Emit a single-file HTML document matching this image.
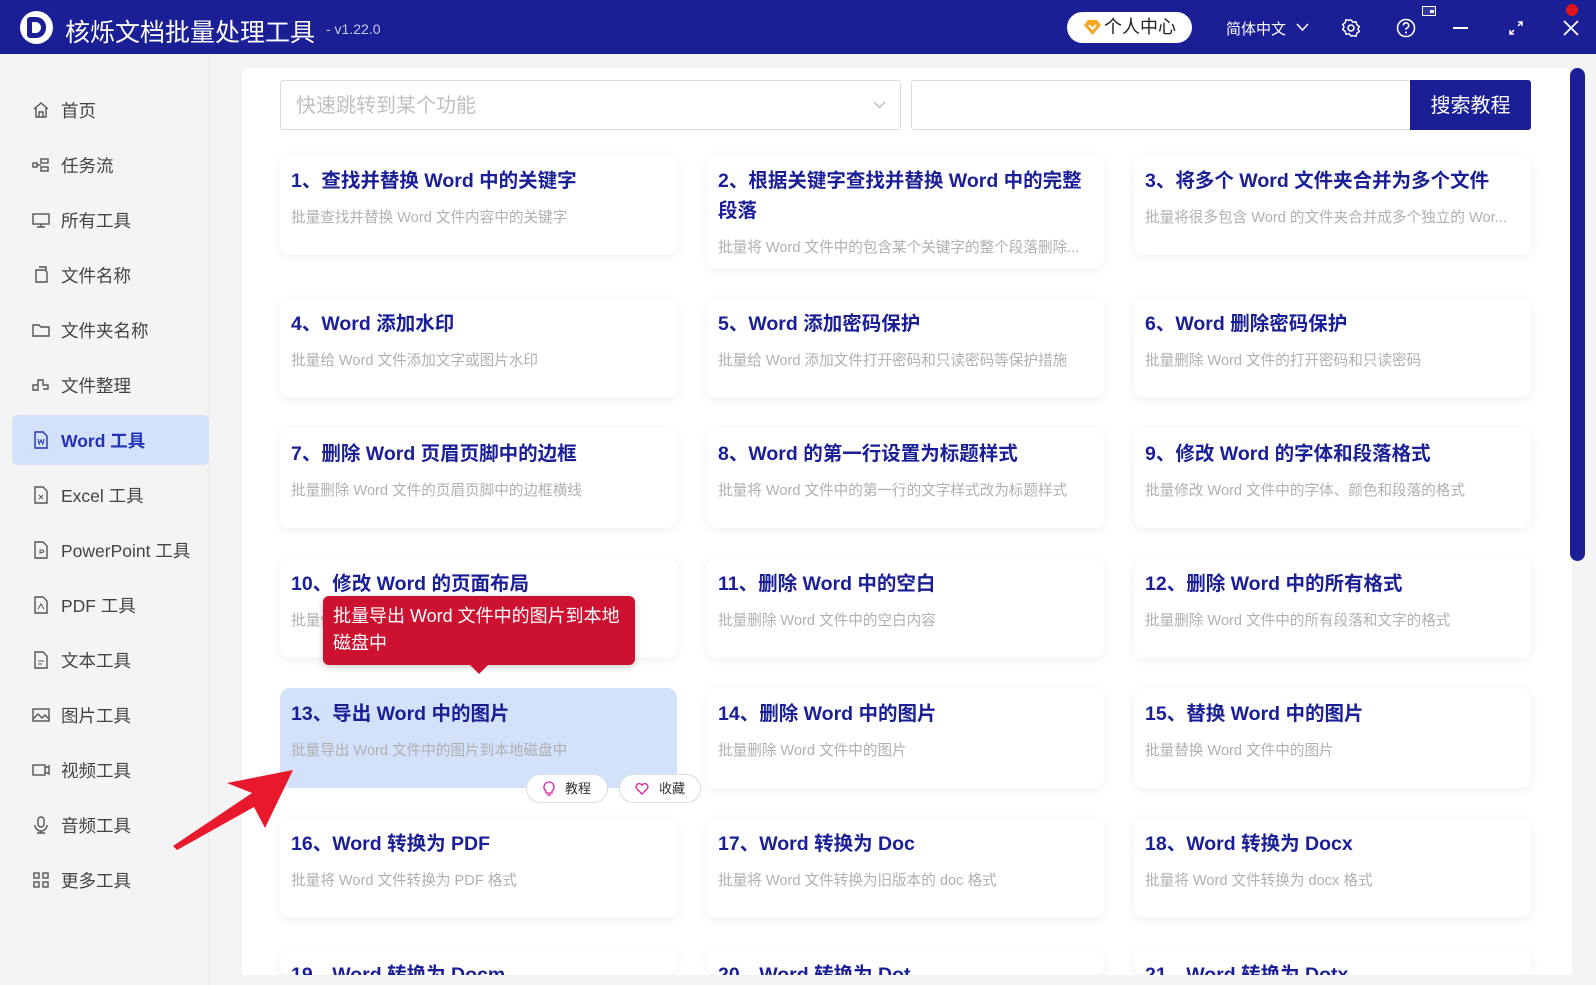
<!DOCTYPE html>
<html><head><meta charset="utf-8"><style>
*{margin:0;padding:0;box-sizing:border-box}
html,body{width:1596px;height:985px;overflow:hidden}
body{background:#f4f4f4;font-family:"Liberation Sans","Noto Sans CJK SC",sans-serif}
#w{position:relative;width:1596px;height:985px;overflow:hidden}
.hdr{position:absolute;left:0;top:0;width:1596px;height:54px;background:#1a1f96;color:#fff}
.abs{position:absolute}
.side{position:absolute;left:0;top:54px;width:209px;height:931px;background:#f4f4f4;border-right:1px solid #ececec}
.item{position:absolute;left:12px;width:197px;height:50px;display:flex;align-items:center;font-size:17.5px;color:#444}
.item svg{position:absolute;left:20px}
.item span{position:absolute;left:49px}
.item.act{background:#d3e1fb;border-radius:6px;color:#2533b8;font-weight:bold}
.panel{position:absolute;left:242px;top:68px;width:1330px;height:907px;background:#fff;border-radius:8px 8px 0 0}
.card{position:absolute;width:397px;height:100px;background:#fff;border-radius:10px;box-shadow:0 2px 10px rgba(0,0,0,.07);padding:11px 11px}
.card h3{font-size:19.5px;color:#1a1f96;font-weight:bold;line-height:30px}
.card p{font-size:14.6px;color:#b0b0b0;margin-top:10px;white-space:nowrap;overflow:hidden;text-overflow:ellipsis}
</style></head><body><div id="w">
<div class="hdr">
 <div class="abs" style="left:20px;top:11px;width:33px;height:33px;border-radius:50%;background:#fff"></div>
 <div class="abs" style="left:27px;top:17px;width:19px;height:21px;border-radius:3px 10px 10px 3px;background:#1a1f96"></div>
 <div class="abs" style="left:32px;top:22px;width:9px;height:11px;border-radius:1px 6px 6px 1px;background:#fff"></div>
 <div class="abs" style="left:65px;top:13px;font-size:25px;">核烁文档批量处理工具</div>
 <div class="abs" style="left:326px;top:21px;font-size:14px;color:#c8cae8">- v1.22.0</div>
 <div class="abs" style="left:1067px;top:12px;width:125px;height:31px;background:#fff;border-radius:16px;color:#222;font-size:18px;line-height:31px;padding-left:37px">个人中心</div>
 <svg class="abs" style="left:1084px;top:20px" width="17" height="15" viewBox="0 0 17 15"><path d="M4 0h9l4 5-8.5 10L0 5z" fill="#f5a623"/><path d="M5 5l3.5 4L12 5" stroke="#fff" stroke-width="2" fill="none"/></svg>
 <div class="abs" style="left:1226px;top:18px;font-size:15px">简体中文</div>
 <svg class="abs" style="left:1296px;top:23px" width="13" height="9"><path d="M1 1l5.5 6L12 1" stroke="#fff" stroke-width="1.5" fill="none"/></svg>
 <svg class="abs" style="left:1341px;top:18px" width="20" height="20" viewBox="0 0 20 20"><circle cx="10" cy="10" r="3" stroke="#fff" stroke-width="1.6" fill="none"/><path d="M10 2l2 2.3 3-.6.8 3 2.5 1.8-1.4 2.5 1.4 2.5-2.5 1.8-.8 3-3-.6L10 18l-2-2.3-3 .6-.8-3L1.7 11.5 3.1 9 1.7 6.5l2.5-1.8.8-3 3 .6z" stroke="#fff" stroke-width="1.5" fill="none" stroke-linejoin="round"/></svg>
 <svg class="abs" style="left:1396px;top:18px" width="20" height="20"><circle cx="10" cy="10" r="8.5" stroke="#fff" stroke-width="1.6" fill="none"/><path d="M7.3 7.5a2.7 2.7 0 1 1 3.7 2.5c-.8.4-1 .9-1 1.8" stroke="#fff" stroke-width="1.6" fill="none"/><circle cx="10" cy="14.5" r="1" fill="#fff"/></svg>
 <svg class="abs" style="left:1422px;top:6px" width="14" height="11"><rect x="0.5" y="0.5" width="13" height="9" stroke="#fff" fill="#333a9a"/><rect x="8" y="4" width="4" height="3" fill="#fff"/></svg>
 <div class="abs" style="left:1453px;top:27px;width:15px;height:2px;background:#fff"></div>
 <svg class="abs" style="left:1508px;top:20px" width="16" height="16"><path d="M2 14l4-4M14 2l-4 4M10 2h4v4M2 10v4h4" stroke="#fff" stroke-width="1.5" fill="none"/></svg>
 <svg class="abs" style="left:1563px;top:20px" width="16" height="16"><path d="M1 1l14 14M15 1L1 15" stroke="#fff" stroke-width="1.8"/></svg>
 <div class="abs" style="left:1566px;top:4px;width:12px;height:12px;border-radius:50%;background:#e0141e"></div>
</div>

<div class="side">
 <div class="item" style="top:31px"><svg width="18" height="18" viewBox="0 0 18 18" fill="none" stroke="#555" stroke-width="1.4"><path d="M2 8L9 2l7 6M4 7v9h10V7M7 16v-5h4v5"/></svg><span>首页</span></div>
 <div class="item" style="top:86px"><svg width="18" height="18" viewBox="0 0 18 18" fill="none" stroke="#555" stroke-width="1.4"><rect x="1" y="7" width="4" height="4"/><rect x="9" y="3" width="7" height="4"/><rect x="9" y="11" width="7" height="4"/><path d="M5 9h4"/></svg><span>任务流</span></div>
 <div class="item" style="top:141px"><svg width="18" height="18" viewBox="0 0 18 18" fill="none" stroke="#555" stroke-width="1.4"><rect x="1" y="3" width="16" height="10"/><path d="M9 13v3M5 16h8"/></svg><span>所有工具</span></div>
 <div class="item" style="top:196px"><svg width="18" height="18" viewBox="0 0 18 18" fill="none" stroke="#555" stroke-width="1.4"><path d="M4 4h9l2 2v10H4zM7 1h7v3"/></svg><span>文件名称</span></div>
 <div class="item" style="top:251px"><svg width="18" height="18" viewBox="0 0 18 18" fill="none" stroke="#555" stroke-width="1.4"><path d="M1 4h6l2 2h8v9H1z"/></svg><span>文件夹名称</span></div>
 <div class="item" style="top:306px"><svg width="18" height="18" viewBox="0 0 18 18" fill="none" stroke="#555" stroke-width="1.4"><path d="M1 9h5v5H1zM6 9V4h5v5h5v4h-5"/></svg><span>文件整理</span></div>
 <div class="item act" style="top:361px"><svg width="18" height="18" viewBox="0 0 18 18" fill="none" stroke="#2533b8" stroke-width="1.4"><path d="M3 1h8l4 4v12H3z"/><path d="M6 8l1.2 5 1.8-4 1.8 4L12 8" stroke-width="1"/></svg><span>Word 工具</span></div>
 <div class="item" style="top:416px"><svg width="18" height="18" viewBox="0 0 18 18" fill="none" stroke="#555" stroke-width="1.4"><path d="M3 1h8l4 4v12H3z"/><path d="M7 9l4 4M11 9l-4 4" stroke-width="1"/></svg><span>Excel 工具</span></div>
 <div class="item" style="top:471px"><svg width="18" height="18" viewBox="0 0 18 18" fill="none" stroke="#555" stroke-width="1.4"><path d="M3 1h8l4 4v12H3z"/><path d="M8 13V9h2.5a1.2 1.2 0 0 1 0 2.4H8" stroke-width="1"/></svg><span>PowerPoint 工具</span></div>
 <div class="item" style="top:526px"><svg width="18" height="18" viewBox="0 0 18 18" fill="none" stroke="#555" stroke-width="1.4"><path d="M3 1h8l4 4v12H3z"/><path d="M6 13l3-5 3 5" stroke-width="1"/></svg><span>PDF 工具</span></div>
 <div class="item" style="top:581px"><svg width="18" height="18" viewBox="0 0 18 18" fill="none" stroke="#555" stroke-width="1.4"><path d="M3 1h8l4 4v12H3z"/><path d="M6 10h6M6 13h4" stroke-width="1"/></svg><span>文本工具</span></div>
 <div class="item" style="top:636px"><svg width="18" height="18" viewBox="0 0 18 18" fill="none" stroke="#555" stroke-width="1.4"><rect x="1" y="3" width="16" height="12"/><path d="M1 13l5-5 4 4 3-3 4 4"/></svg><span>图片工具</span></div>
 <div class="item" style="top:691px"><svg width="18" height="18" viewBox="0 0 18 18" fill="none" stroke="#555" stroke-width="1.4"><rect x="1" y="4" width="12" height="10"/><path d="M13 7l4-2v8l-4-2"/></svg><span>视频工具</span></div>
 <div class="item" style="top:746px"><svg width="18" height="18" viewBox="0 0 18 18" fill="none" stroke="#555" stroke-width="1.4"><rect x="6" y="1" width="6" height="10" rx="3"/><path d="M3 9a6 6 0 0 0 12 0M9 15v2M5 17h8"/></svg><span>音频工具</span></div>
 <div class="item" style="top:801px"><svg width="18" height="18" viewBox="0 0 18 18" fill="none" stroke="#555" stroke-width="1.4"><rect x="2" y="2" width="5" height="5"/><rect x="11" y="2" width="5" height="5"/><rect x="2" y="11" width="5" height="5"/><rect x="11" y="11" width="5" height="5"/></svg><span>更多工具</span></div>
</div>

<div class="panel"></div>
<div class="abs" style="left:1570px;top:68px;width:15px;height:493px;background:#1a1f96;border-radius:8px"></div>

<div class="abs" style="left:280px;top:80px;width:621px;height:50px;border:1px solid #dcdcdc;border-radius:3px;font-size:20px;color:#c0c0c0;line-height:50px;padding-left:15px">快速跳转到某个功能</div>
<svg class="abs" style="left:873px;top:101px" width="13" height="8"><path d="M1 1l5.5 5.5L12 1" stroke="#bbb" stroke-width="1.3" fill="none"/></svg>
<div class="abs" style="left:911px;top:80px;width:500px;height:50px;border:1px solid #dcdcdc;border-radius:3px 0 0 3px"></div>
<div class="abs" style="left:1410px;top:80px;width:121px;height:50px;background:#1a1f96;border-radius:0 3px 3px 0;color:#fff;font-size:20px;line-height:52px;text-align:center">搜索教程</div>

<div class="card" style="left:280px;top:155px"><h3>1、查找并替换 Word 中的关键字</h3><p>批量查找并替换 Word 文件内容中的关键字</p></div>
<div class="card" style="left:707px;top:155px;height:113px"><h3>2、根据关键字查找并替换 Word 中的完整段落</h3><p>批量将 Word 文件中的包含某个关键字的整个段落删除...</p></div>
<div class="card" style="left:1134px;top:155px"><h3>3、将多个 Word 文件夹合并为多个文件</h3><p>批量将很多包含 Word 的文件夹合并成多个独立的 Wor...</p></div>

<div class="card" style="left:280px;top:298px"><h3>4、Word 添加水印</h3><p>批量给 Word 文件添加文字或图片水印</p></div>
<div class="card" style="left:707px;top:298px"><h3>5、Word 添加密码保护</h3><p>批量给 Word 添加文件打开密码和只读密码等保护措施</p></div>
<div class="card" style="left:1134px;top:298px"><h3>6、Word 删除密码保护</h3><p>批量删除 Word 文件的打开密码和只读密码</p></div>

<div class="card" style="left:280px;top:428px"><h3>7、删除 Word 页眉页脚中的边框</h3><p>批量删除 Word 文件的页眉页脚中的边框横线</p></div>
<div class="card" style="left:707px;top:428px"><h3>8、Word 的第一行设置为标题样式</h3><p>批量将 Word 文件中的第一行的文字样式改为标题样式</p></div>
<div class="card" style="left:1134px;top:428px"><h3>9、修改 Word 的字体和段落格式</h3><p>批量修改 Word 文件中的字体、颜色和段落的格式</p></div>

<div class="card" style="left:280px;top:558px"><h3>10、修改 Word 的页面布局</h3><p>批量修改 Word 文件的页面布局</p></div>
<div class="card" style="left:707px;top:558px"><h3>11、删除 Word 中的空白</h3><p>批量删除 Word 文件中的空白内容</p></div>
<div class="card" style="left:1134px;top:558px"><h3>12、删除 Word 中的所有格式</h3><p>批量删除 Word 文件中的所有段落和文字的格式</p></div>

<div class="card" style="left:280px;top:688px;background:#d3e1fb;box-shadow:none"><h3>13、导出 Word 中的图片</h3><p>批量导出 Word 文件中的图片到本地磁盘中</p></div>
<div class="card" style="left:707px;top:688px"><h3>14、删除 Word 中的图片</h3><p>批量删除 Word 文件中的图片</p></div>
<div class="card" style="left:1134px;top:688px"><h3>15、替换 Word 中的图片</h3><p>批量替换 Word 文件中的图片</p></div>

<div class="card" style="left:280px;top:818px"><h3>16、Word 转换为 PDF</h3><p>批量将 Word 文件转换为 PDF 格式</p></div>
<div class="card" style="left:707px;top:818px"><h3>17、Word 转换为 Doc</h3><p>批量将 Word 文件转换为旧版本的 doc 格式</p></div>
<div class="card" style="left:1134px;top:818px"><h3>18、Word 转换为 Docx</h3><p>批量将 Word 文件转换为 docx 格式</p></div>

<div class="card" style="left:280px;top:949px;height:26px"><h3>19、Word 转换为 Docm</h3></div>
<div class="card" style="left:707px;top:949px;height:26px"><h3>20、Word 转换为 Dot</h3></div>
<div class="card" style="left:1134px;top:949px;height:26px"><h3>21、Word 转换为 Dotx</h3></div>
<div class="abs" style="left:242px;top:975px;width:1354px;height:10px;background:#f4f4f4"></div>

<div class="abs" style="left:526px;top:774px;width:82px;height:29px;background:#fff;border:1px solid #ddd;border-radius:15px;font-size:13px;color:#333;line-height:27px;padding-left:38px">教程</div>
<svg class="abs" style="left:543px;top:781px" width="12" height="16"><path d="M6 1a5 5 0 0 0-3 9v2h6v-2a5 5 0 0 0-3-9zM4 14h4" stroke="#d61fa0" stroke-width="1.3" fill="none"/></svg>
<div class="abs" style="left:619px;top:774px;width:82px;height:29px;background:#fff;border:1px solid #ddd;border-radius:15px;font-size:13px;color:#333;line-height:27px;padding-left:39px">收藏</div>
<svg class="abs" style="left:635px;top:783px" width="14" height="12"><path d="M7 11L1.5 5.5a3 3 0 0 1 5.5-3.3 3 3 0 0 1 5.5 3.3z" stroke="#d61fa0" stroke-width="1.3" fill="none"/></svg>

<div class="abs" style="left:323px;top:596px;width:312px;height:69px;background:#cc1230;border-radius:6px;color:#fff;font-size:18px;line-height:27px;padding:7px 10px;box-shadow:0 2px 8px rgba(0,0,0,.2)">批量导出 Word 文件中的图片到本地磁盘中</div>
<div class="abs" style="left:470px;top:665px;width:0;height:0;border-left:9px solid transparent;border-right:9px solid transparent;border-top:9px solid #cc1230"></div>

<svg class="abs" style="left:165px;top:760px" width="135" height="90"><polygon points="8,86 87,33 62,23 128,10 100,68 89,47 12,90" fill="#e8192c"/></svg>
</div></body></html>
